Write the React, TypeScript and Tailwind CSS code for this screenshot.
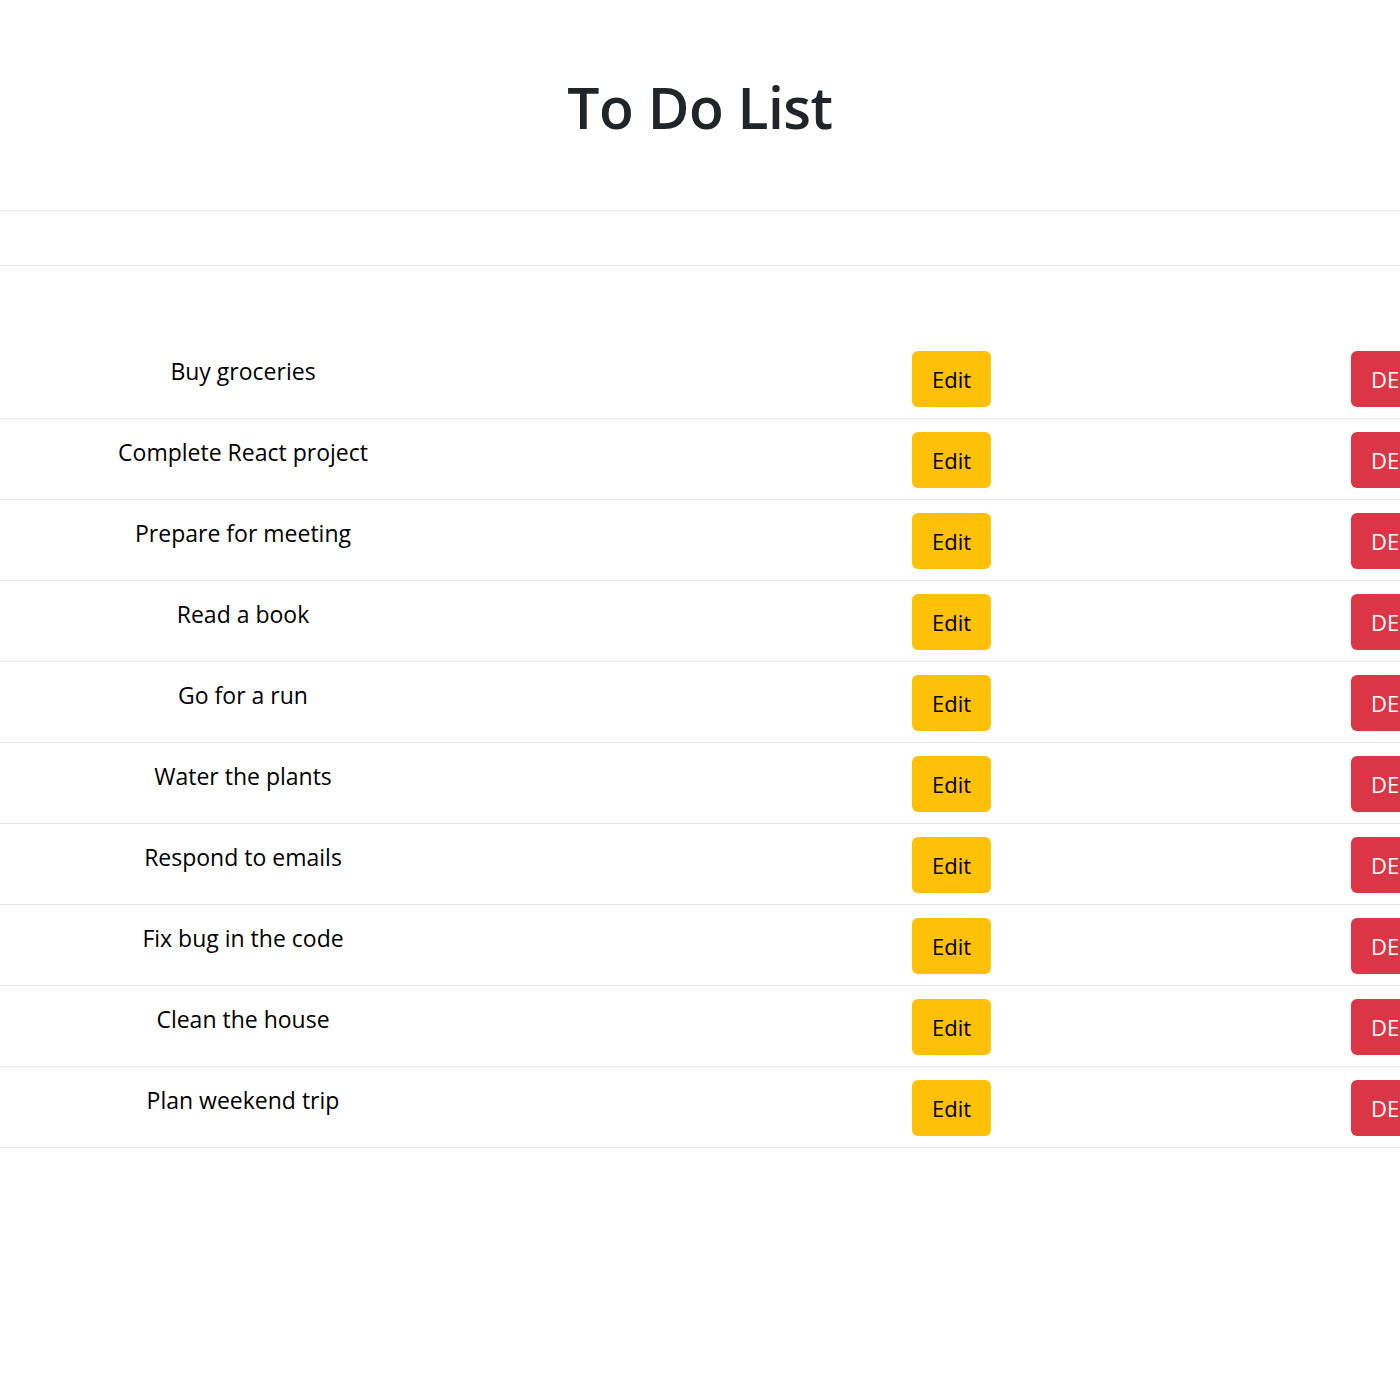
import React from 'react';

const todos = [
  'Buy groceries',
  'Complete React project',
  'Prepare for meeting',
  'Read a book',
  'Go for a run',
  'Water the plants',
  'Respond to emails',
  'Fix bug in the code',
  'Clean the house',
  'Plan weekend trip',
];

export default function App() {
  return (
    <div className="min-h-screen w-full overflow-hidden bg-white text-[#212529]" style={{ fontFamily: '"Open Sans", "Noto Sans", sans-serif' }}>
      <h1 className="pt-[69px] text-center text-[57px] font-semibold leading-[76px] tracking-[-0.5px]">To Do List</h1>

      {/* empty header row */}
      <div className="mt-[65px] h-[56px] w-full border-y border-[#e5e7eb]" />

      <div className="mt-[72px]">
        {todos.map((t) => (
          <div key={t} className="flex h-[81px] w-[1500px] border-b border-[#e5e7eb]">
            <div className="w-[486px] pt-[16px] text-center text-[23px] leading-[34px] text-black">{t}</div>
            <div className="w-[865px] pt-[13px] pl-[426px]">
              <button className="h-[56px] w-[79px] rounded-[6px] bg-[#ffc107] text-[22px] text-black">Edit</button>
            </div>
            <div className="pt-[13px]">
              <button className="h-[56px] w-[100px] rounded-[6px] bg-[#dc3545] pl-[20px] text-left text-[22px] text-white">DELETE</button>
            </div>
          </div>
        ))}
      </div>
    </div>
  );
}
